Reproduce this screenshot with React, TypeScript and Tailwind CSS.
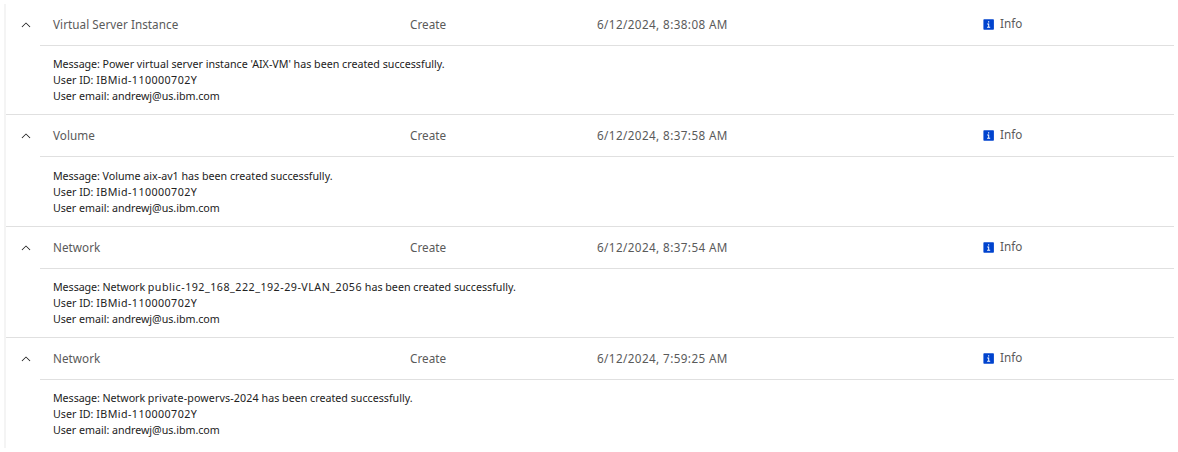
import { Fragment } from 'react';

type Segment = { text: string; tracking?: string };

type EventEntry = {
  resource: string;
  time: string;
  message: Segment[];
  bodyPadding: string;
  height: string;
};

const userId: Segment[] = [{ text: 'User ID: ' }, { text: 'IBMid-110000702Y', tracking: 'tracking-[0.43px]' }];
const userEmail: Segment[] = [{ text: 'User email: andrewj@us.ibm.com', tracking: 'tracking-[-0.03px]' }];

const events: EventEntry[] = [
  {
    resource: 'Virtual Server Instance',
    time: '6/12/2024, 8:38:08 AM',
    message: [
      { text: 'Message: ', tracking: 'tracking-[-0.08px]' },
      { text: "Power virtual server instance 'AIX-VM' has been created successfully." },
    ],
    bodyPadding: 'pt-[10px]',
    height: 'h-[111px]',
  },
  {
    resource: 'Volume',
    time: '6/12/2024, 8:37:58 AM',
    message: [
      { text: 'Message: ', tracking: 'tracking-[-0.08px]' },
      { text: 'Volume aix-av1 has been created successfully.' },
    ],
    bodyPadding: 'pt-[11px]',
    height: 'h-[112px]',
  },
  {
    resource: 'Network',
    time: '6/12/2024, 8:37:54 AM',
    message: [
      { text: 'Message: Network ', tracking: 'tracking-[-0.07px]' },
      { text: 'public-192_168_222_192-29-VLAN_2056', tracking: 'tracking-[0.5px]' },
      { text: ' has been created successfully.' },
    ],
    bodyPadding: 'pt-[10px]',
    height: 'h-[111px]',
  },
  {
    resource: 'Network',
    time: '6/12/2024, 7:59:25 AM',
    message: [
      { text: 'Message: Network ', tracking: 'tracking-[-0.07px]' },
      { text: 'private-powervs-2024', tracking: 'tracking-[0.12px]' },
      { text: ' has been created successfully.' },
    ],
    bodyPadding: 'pt-[10px]',
    height: 'h-[110px]',
  },
];

function ChevronUp() {
  return (
    <svg className="h-[14px] w-[14px] shrink-0" viewBox="0 0 16 16" fill="#161616" aria-hidden="true">
      <path d="M8 5L13 10 12.3 10.7 8 6.4 3.7 10.7 3 10z" />
    </svg>
  );
}

function InfoSquare() {
  return (
    <svg className="h-[11px] w-[11px] shrink-0" viewBox="0 0 11 11" aria-hidden="true">
      <rect x="0.4" y="0.2" width="10.5" height="10.6" rx="0.7" fill="#0043ce" />
      <path d="M5.1 2.3h1.1v1.1h-1.1zM4.2 4.5h2v3.3h1v0.9h-3.1v-0.9h1.1v-2.4h-1z" fill="#fff" />
    </svg>
  );
}

function Line({ segments }: { segments: Segment[] }) {
  return (
    <p className="whitespace-pre">
      {segments.map(({ text, tracking }) => (
        tracking ? <span key={text} className={tracking}>{text}</span> : <Fragment key={text}>{text}</Fragment>
      ))}
    </p>
  );
}

function EventRow({ event, last }: { event: EventEntry; last: boolean }) {
  return (
    <section className={`${event.height} ${last ? '' : 'border-b border-[#e0e0e0]'}`}>
      <div className="flex">
        <div className="flex h-[41px] w-[34px] shrink-0 items-center pl-[13px]">
          <ChevronUp />
        </div>
        <div className="flex h-[42px] grow items-center border-b border-[#e0e0e0] pl-[13px] text-[11.7px] leading-4 text-[#5a5a5a]">
          <div className="w-[357px] shrink-0 pb-px tracking-[0.05px]">{event.resource}</div>
          <div className="w-[187px] shrink-0 pb-px tracking-[0.05px]">Create</div>
          <div className="w-[386px] shrink-0 pb-px tracking-[0.4px]">{event.time}</div>
          <div className="flex items-center gap-[6px]">
            <InfoSquare />
            <span className="pb-[3px]">Info</span>
          </div>
        </div>
      </div>
      <div className={`pl-[47px] text-[10.7px] leading-4 text-[#222222] ${event.bodyPadding}`}>
        <Line segments={event.message} />
        <Line segments={userId} />
        <Line segments={userEmail} />
      </div>
    </section>
  );
}

export default function App() {
  return (
    <main className="h-[452px] w-[1178px] overflow-hidden bg-white pt-1 pr-1 pl-1 font-['Noto_Sans','Liberation_Sans',sans-serif]">
      <div className="h-[444px] border-l-2 border-[#f4f4f4]">
        {events.map((event, index) => (
          <EventRow key={event.time} event={event} last={index === events.length - 1} />
        ))}
      </div>
    </main>
  );
}
